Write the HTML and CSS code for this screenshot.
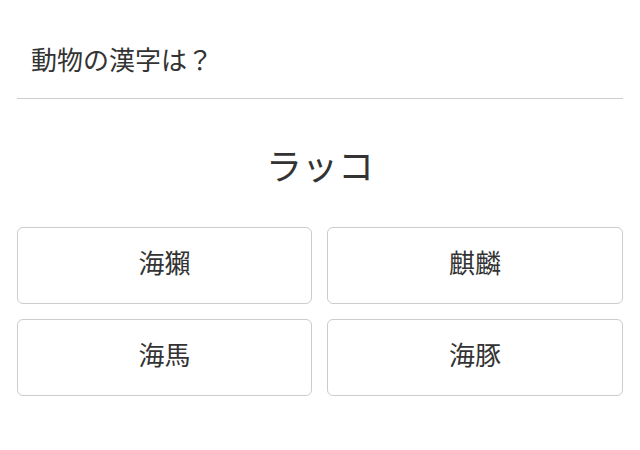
FILE: index.html
```html
<!DOCTYPE html>
<html lang="ja">
<head>
<meta charset="utf-8">
<link rel="stylesheet" href="styles.css">
</head>
<body>
<div class="quiz">
  <div class="header">動物の漢字は？</div>
  <div class="word">ラッコ</div>
  <div class="choices">
    <button class="choice">海獺</button>
    <button class="choice">麒麟</button>
    <button class="choice">海馬</button>
    <button class="choice">海豚</button>
  </div>
</div>
</body>
</html>
```
FILE: styles.css
```css
html, body {
  margin: 0;
  padding: 0;
  background: #fff;
}
body {
  font-family: "Noto Sans CJK JP", "Noto Sans", sans-serif;
  color: #333;
}
.quiz {
  padding: 0 17px;
}
.header {
  font-size: 26px;
  line-height: 30px;
  padding: 44px 14px 24px;
  border-bottom: 1px solid #ccc;
}
.word {
  text-align: center;
  font-size: 36px;
  line-height: 40px;
  padding: 45px 0 43px;
}
.choices {
  display: grid;
  grid-template-columns: 295px 1fr;
  gap: 15px;
}
.choice {
  height: 77px;
  background: #fff;
  border: 1px solid #ccc;
  border-radius: 6px;
  font-family: inherit;
  font-size: 26px;
  color: #333;
  padding: 0 0 9px;
}
```
